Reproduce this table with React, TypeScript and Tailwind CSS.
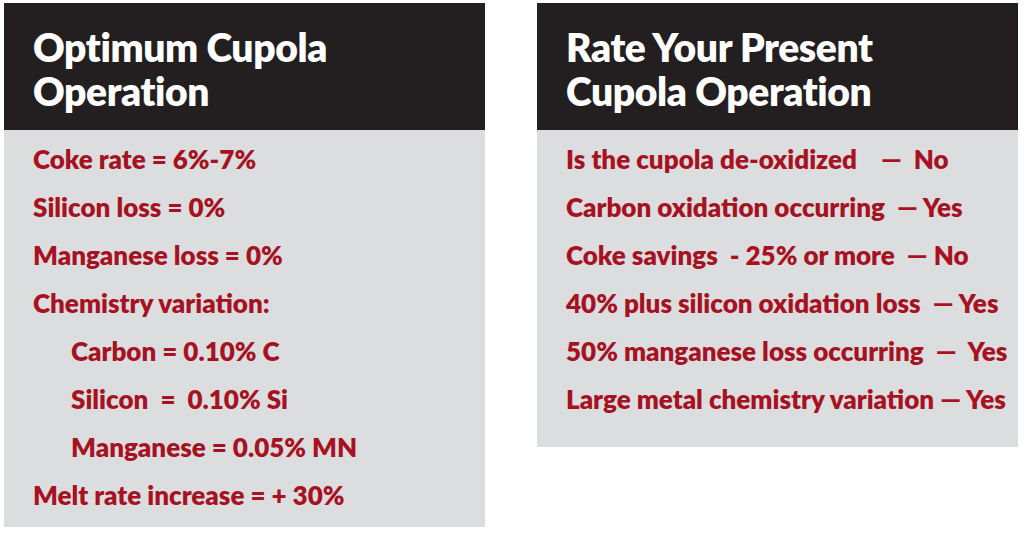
const left: { text: string; indent?: boolean }[] = [
  { text: "Coke rate = 6%-7%" },
  { text: "Silicon loss = 0%" },
  { text: "Manganese loss = 0%" },
  { text: "Chemistry variation:" },
  { text: "Carbon = 0.10% C", indent: true },
  { text: "Silicon  =  0.10% Si", indent: true },
  { text: "Manganese = 0.05% MN", indent: true },
  { text: "Melt rate increase = + 30%" },
];

const right: string[] = [
  "Is the cupola de-oxidized    —  No",
  "Carbon oxidation occurring  — Yes",
  "Coke savings  - 25% or more  — No",
  "40% plus silicon oxidation loss  — Yes",
  "50% manganese loss occurring  —  Yes",
  "Large metal chemistry variation — Yes",
];

function Card({ title, children, bodyH }: { title: [string, string]; children: React.ReactNode; bodyH: string }) {
  return (
    <div className="w-[481px] shrink-0">
      <div className="flex h-[127px] flex-col justify-center bg-[#231f20] pl-[29px] pt-[5px] text-[39px] font-extrabold leading-[44px] tracking-[-0.4px] text-white">
        <div>{title[0]}</div>
        <div>{title[1]}</div>
      </div>
      <div className={`bg-[#dcdddf] pl-[29px] pt-[5px] ${bodyH}`}>{children}</div>
    </div>
  );
}

export default function App() {
  return (
    <div
      className="flex h-[534px] w-[1024px] items-start gap-[52px] bg-white pl-[4px] pt-[3px]"
      style={{ fontFamily: "Lato, 'Open Sans', sans-serif" }}
    >
      <Card title={["Optimum Cupola", "Operation"]} bodyH="h-[397px]">
        {left.map((r) => (
          <div
            key={r.text}
            className={`whitespace-pre text-[26px] font-extrabold leading-[48px] text-[#a6121f] ${r.indent ? "pl-[38px]" : ""}`}
          >
            {r.text}
          </div>
        ))}
      </Card>
      <Card title={["Rate Your Present", "Cupola Operation"]} bodyH="h-[317px]">
        {right.map((t) => (
          <div key={t} className="whitespace-pre text-[26px] font-extrabold leading-[48px] text-[#a6121f]">
            {t}
          </div>
        ))}
      </Card>
    </div>
  );
}
